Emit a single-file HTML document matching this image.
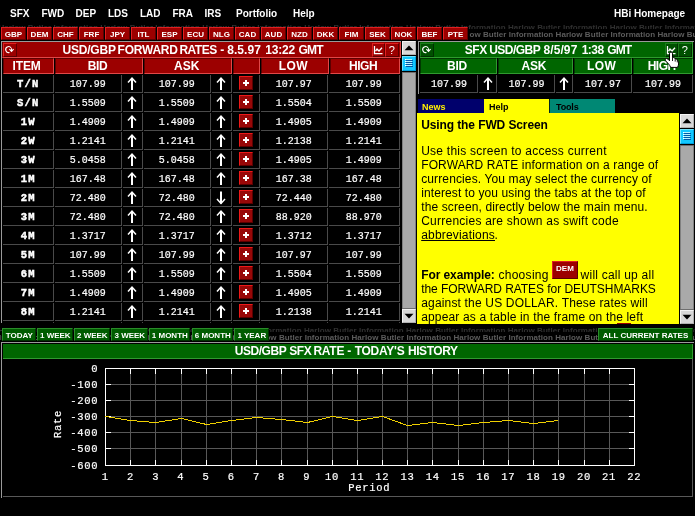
<!DOCTYPE html>
<html lang="en"><head><meta charset="utf-8"><title>HBi - USD/GBP Forward Rates</title>
<style>
html,body{margin:0;padding:0;background:#000;}
body{width:695px;height:516px;position:relative;overflow:hidden;}
div{position:absolute;}
.t{position:absolute;white-space:nowrap;display:block;margin:0;padding:0;}
.sb{font-family:'Liberation Sans',Arial,sans-serif;font-weight:bold;}
.sr{font-family:'Liberation Sans',Arial,sans-serif;font-weight:normal;}
.mr{font-family:'Liberation Mono','Courier New',monospace;font-weight:normal;-webkit-text-stroke:0.2px currentColor;}
.mb{font-family:'Liberation Mono','Courier New',monospace;font-weight:bold;}
</style></head>
<body>
<div id="app" style="left:0;top:0;width:695px;height:516px;overflow:hidden;will-change:transform">
<div style="left:0px;top:25px;width:695px;height:4px;overflow:hidden">
<span class="t sb" style="left:-103.40000000000003px;top:-2px;line-height:9px;font-size:8px;color:#303030;letter-spacing:0.055px" id="tick0">Harlow Butler Information Harlow Butler Information Harlow Butler Information Harlow Butler Information Harlow Butler Information Harlow Butler Information Harlow Butler Information Harlow Butler Information Harlow Butler Information Harlow Butler Information Harlow Butler Information Harlow Butler Information </span>
</div>
<div style="left:0px;top:30px;width:695px;height:8px;overflow:hidden">
<span class="t sb" style="left:-55.700000000000045px;top:0px;line-height:9px;font-size:8px;color:#5c5c5c;letter-spacing:0.055px" id="tick1">Harlow Butler Information Harlow Butler Information Harlow Butler Information Harlow Butler Information Harlow Butler Information Harlow Butler Information Harlow Butler Information Harlow Butler Information Harlow Butler Information Harlow Butler Information Harlow Butler Information Harlow Butler Information </span>
</div>
<div style="left:469px;top:38px;width:226px;height:2px;overflow:hidden">
<span class="t sb" style="left:-559.2px;top:-0.3999999999999986px;line-height:9px;font-size:8px;color:#555555;letter-spacing:0.055px" id="tick2">Harlow Butler Information Harlow Butler Information Harlow Butler Information Harlow Butler Information Harlow Butler Information Harlow Butler Information Harlow Butler Information Harlow Butler Information Harlow Butler Information Harlow Butler Information Harlow Butler Information Harlow Butler Information </span>
</div>
<div style="left:0px;top:327px;width:695px;height:5px;overflow:hidden">
<span class="t sb" style="left:-103.5px;top:-1.5px;line-height:9px;font-size:8px;color:#303030;letter-spacing:0.055px" id="tick3">Harlow Butler Information Harlow Butler Information Harlow Butler Information Harlow Butler Information Harlow Butler Information Harlow Butler Information Harlow Butler Information Harlow Butler Information Harlow Butler Information Harlow Butler Information Harlow Butler Information Harlow Butler Information </span>
</div>
<div style="left:0px;top:333px;width:695px;height:8px;overflow:hidden">
<span class="t sb" style="left:-56.0px;top:0px;line-height:9px;font-size:8px;color:#5c5c5c;letter-spacing:0.055px" id="tick4">Harlow Butler Information Harlow Butler Information Harlow Butler Information Harlow Butler Information Harlow Butler Information Harlow Butler Information Harlow Butler Information Harlow Butler Information Harlow Butler Information Harlow Butler Information Harlow Butler Information Harlow Butler Information </span>
</div>
<div style="left:0px;top:0px;width:695px;height:25px;background:#000;"></div>
<span id="t6" class="t sb" style="top:8px;line-height:11px;font-size:10px;color:#fff;left:10px;">SFX</span>
<span id="t7" class="t sb" style="top:8px;line-height:11px;font-size:10px;color:#fff;left:41.5px;">FWD</span>
<span id="t8" class="t sb" style="top:8px;line-height:11px;font-size:10px;color:#fff;left:75.5px;">DEP</span>
<span id="t9" class="t sb" style="top:8px;line-height:11px;font-size:10px;color:#fff;left:108px;">LDS</span>
<span id="t10" class="t sb" style="top:8px;line-height:11px;font-size:10px;color:#fff;left:140px;">LAD</span>
<span id="t11" class="t sb" style="top:8px;line-height:11px;font-size:10px;color:#fff;left:172.5px;">FRA</span>
<span id="t12" class="t sb" style="top:8px;line-height:11px;font-size:10px;color:#fff;left:204.5px;">IRS</span>
<span id="t13" class="t sb" style="top:8px;line-height:11px;font-size:10px;color:#fff;left:236px;">Portfolio</span>
<span id="t14" class="t sb" style="top:8px;line-height:11px;font-size:10px;color:#fff;left:293px;">Help</span>
<span id="t15" class="t sb" style="top:8px;line-height:11px;font-size:10px;color:#fff;left:614px;">HBi Homepage</span>
<div style="left:0px;top:27px;width:469px;height:14px;background:#000;"></div>
<div style="left:1px;top:27px;width:23px;height:11px;background:#9c0000;border:1px solid;border-color:#e02020 #5c0000 #5c0000 #e02020;"></div>
<span class="t sb" style="top:30px;line-height:9px;font-size:8px;color:#fff;left:-136.5px;width:300px;text-align:center;"><span id="t16">GBP</span></span>
<div style="left:27px;top:27px;width:23px;height:11px;background:#9c0000;border:1px solid;border-color:#e02020 #5c0000 #5c0000 #e02020;"></div>
<span class="t sb" style="top:30px;line-height:9px;font-size:8px;color:#fff;left:-110.5px;width:300px;text-align:center;"><span id="t17">DEM</span></span>
<div style="left:53px;top:27px;width:23px;height:11px;background:#9c0000;border:1px solid;border-color:#e02020 #5c0000 #5c0000 #e02020;"></div>
<span class="t sb" style="top:30px;line-height:9px;font-size:8px;color:#fff;left:-84.5px;width:300px;text-align:center;"><span id="t18">CHF</span></span>
<div style="left:79px;top:27px;width:23px;height:11px;background:#9c0000;border:1px solid;border-color:#e02020 #5c0000 #5c0000 #e02020;"></div>
<span class="t sb" style="top:30px;line-height:9px;font-size:8px;color:#fff;left:-58.5px;width:300px;text-align:center;"><span id="t19">FRF</span></span>
<div style="left:105px;top:27px;width:23px;height:11px;background:#9c0000;border:1px solid;border-color:#e02020 #5c0000 #5c0000 #e02020;"></div>
<span class="t sb" style="top:30px;line-height:9px;font-size:8px;color:#fff;left:-32.5px;width:300px;text-align:center;"><span id="t20">JPY</span></span>
<div style="left:131px;top:27px;width:23px;height:11px;background:#9c0000;border:1px solid;border-color:#e02020 #5c0000 #5c0000 #e02020;"></div>
<span class="t sb" style="top:30px;line-height:9px;font-size:8px;color:#fff;left:-6.5px;width:300px;text-align:center;"><span id="t21">ITL</span></span>
<div style="left:157px;top:27px;width:23px;height:11px;background:#9c0000;border:1px solid;border-color:#e02020 #5c0000 #5c0000 #e02020;"></div>
<span class="t sb" style="top:30px;line-height:9px;font-size:8px;color:#fff;left:19.5px;width:300px;text-align:center;"><span id="t22">ESP</span></span>
<div style="left:183px;top:27px;width:23px;height:11px;background:#9c0000;border:1px solid;border-color:#e02020 #5c0000 #5c0000 #e02020;"></div>
<span class="t sb" style="top:30px;line-height:9px;font-size:8px;color:#fff;left:45.5px;width:300px;text-align:center;"><span id="t23">ECU</span></span>
<div style="left:209px;top:27px;width:23px;height:11px;background:#9c0000;border:1px solid;border-color:#e02020 #5c0000 #5c0000 #e02020;"></div>
<span class="t sb" style="top:30px;line-height:9px;font-size:8px;color:#fff;left:71.5px;width:300px;text-align:center;"><span id="t24">NLG</span></span>
<div style="left:235px;top:27px;width:23px;height:11px;background:#9c0000;border:1px solid;border-color:#e02020 #5c0000 #5c0000 #e02020;"></div>
<span class="t sb" style="top:30px;line-height:9px;font-size:8px;color:#fff;left:97.5px;width:300px;text-align:center;"><span id="t25">CAD</span></span>
<div style="left:261px;top:27px;width:23px;height:11px;background:#9c0000;border:1px solid;border-color:#e02020 #5c0000 #5c0000 #e02020;"></div>
<span class="t sb" style="top:30px;line-height:9px;font-size:8px;color:#fff;left:123.5px;width:300px;text-align:center;"><span id="t26">AUD</span></span>
<div style="left:287px;top:27px;width:23px;height:11px;background:#9c0000;border:1px solid;border-color:#e02020 #5c0000 #5c0000 #e02020;"></div>
<span class="t sb" style="top:30px;line-height:9px;font-size:8px;color:#fff;left:149.5px;width:300px;text-align:center;"><span id="t27">NZD</span></span>
<div style="left:313px;top:27px;width:23px;height:11px;background:#9c0000;border:1px solid;border-color:#e02020 #5c0000 #5c0000 #e02020;"></div>
<span class="t sb" style="top:30px;line-height:9px;font-size:8px;color:#fff;left:175.5px;width:300px;text-align:center;"><span id="t28">DKK</span></span>
<div style="left:339px;top:27px;width:23px;height:11px;background:#9c0000;border:1px solid;border-color:#e02020 #5c0000 #5c0000 #e02020;"></div>
<span class="t sb" style="top:30px;line-height:9px;font-size:8px;color:#fff;left:201.5px;width:300px;text-align:center;"><span id="t29">FIM</span></span>
<div style="left:365px;top:27px;width:23px;height:11px;background:#9c0000;border:1px solid;border-color:#e02020 #5c0000 #5c0000 #e02020;"></div>
<span class="t sb" style="top:30px;line-height:9px;font-size:8px;color:#fff;left:227.5px;width:300px;text-align:center;"><span id="t30">SEK</span></span>
<div style="left:391px;top:27px;width:23px;height:11px;background:#9c0000;border:1px solid;border-color:#e02020 #5c0000 #5c0000 #e02020;"></div>
<span class="t sb" style="top:30px;line-height:9px;font-size:8px;color:#fff;left:253.5px;width:300px;text-align:center;"><span id="t31">NOK</span></span>
<div style="left:417px;top:27px;width:23px;height:11px;background:#9c0000;border:1px solid;border-color:#e02020 #5c0000 #5c0000 #e02020;"></div>
<span class="t sb" style="top:30px;line-height:9px;font-size:8px;color:#fff;left:279.5px;width:300px;text-align:center;"><span id="t32">BEF</span></span>
<div style="left:443px;top:27px;width:23px;height:11px;background:#9c0000;border:1px solid;border-color:#e02020 #5c0000 #5c0000 #e02020;"></div>
<span class="t sb" style="top:30px;line-height:9px;font-size:8px;color:#fff;left:305.5px;width:300px;text-align:center;"><span id="t33">PTE</span></span>
<div style="left:0px;top:40px;width:469px;height:1px;background:#000;"></div>
<div style="left:1px;top:41px;width:415px;height:282px;background:#000;"></div>
<div style="left:1px;top:41px;width:400px;height:1px;background:#9a9a9a;"></div>
<div style="left:1px;top:41px;width:1px;height:282px;background:#9a9a9a;"></div>
<div style="left:2px;top:42px;width:397px;height:15px;background:#9c0000;border-left:1px solid #6a0000;border-right:1px solid #e04848;border-bottom:1px solid #e04848"></div>
<div style="left:3px;top:43px;width:12px;height:12px;background:#9c0000;border:1px solid;border-color:#e02020 #5c0000 #5c0000 #e02020;"></div>
<div style="left:372px;top:43px;width:11px;height:12px;background:#9c0000;border:1px solid;border-color:#e02020 #5c0000 #5c0000 #e02020;"></div>
<div style="left:385px;top:43px;width:12px;height:12px;background:#9c0000;border:1px solid;border-color:#e02020 #5c0000 #5c0000 #e02020;"></div>
<span id="t34" class="t sb" style="top:43px;line-height:14px;font-size:12px;color:#fff;letter-spacing:-0.227px;left:62.6px;">USD/GBP</span>
<span id="t35" class="t sb" style="top:43px;line-height:14px;font-size:12px;color:#fff;letter-spacing:-0.240px;left:117.6px;">FORWARD</span>
<span id="t36" class="t sb" style="top:43px;line-height:14px;font-size:12px;color:#fff;letter-spacing:-0.506px;left:179.45px;">RATES</span>
<span id="t37" class="t sb" style="top:43px;line-height:14px;font-size:12px;color:#fff;letter-spacing:1.250px;left:220.2px;">-</span>
<span id="t38" class="t sb" style="top:43px;line-height:14px;font-size:12px;color:#fff;letter-spacing:0.062px;left:227.2px;">8.5.97</span>
<span id="t39" class="t sb" style="top:43px;line-height:14px;font-size:12px;color:#fff;letter-spacing:-0.191px;left:265.2px;">13:22</span>
<span id="t40" class="t sb" style="top:43px;line-height:14px;font-size:12px;color:#fff;letter-spacing:-0.724px;left:298.45px;">GMT</span>
<span class="t sr" style="top:44px;line-height:12px;font-size:11px;color:#fff;left:241.7px;width:300px;text-align:center;"><span id="t41">?</span></span>
<div style="left:3px;top:58px;width:49px;height:14px;background:#9c0000;border:1px solid;border-color:#5c0000 #e04848 #e04848 #5c0000;"></div>
<span id="t42" class="t sb" style="top:59px;line-height:14px;font-size:12px;color:#fff;letter-spacing:-0.143px;left:12.6px;">ITEM</span>
<div style="left:55px;top:58px;width:86px;height:14px;background:#9c0000;border:1px solid;border-color:#5c0000 #e04848 #e04848 #5c0000;"></div>
<span id="t43" class="t sb" style="top:59px;line-height:14px;font-size:12px;color:#fff;letter-spacing:-0.356px;left:87.69999999999999px;">BID</span>
<div style="left:144px;top:58px;width:86px;height:14px;background:#9c0000;border:1px solid;border-color:#5c0000 #e04848 #e04848 #5c0000;"></div>
<span id="t44" class="t sb" style="top:59px;line-height:14px;font-size:12px;color:#fff;letter-spacing:0.000px;left:174.1px;">ASK</span>
<div style="left:233px;top:58px;width:25px;height:14px;background:#9c0000;border:1px solid;border-color:#5c0000 #e04848 #e04848 #5c0000;"></div>
<div style="left:261px;top:58px;width:66px;height:14px;background:#9c0000;border:1px solid;border-color:#5c0000 #e04848 #e04848 #5c0000;"></div>
<span id="t45" class="t sb" style="top:59px;line-height:14px;font-size:12px;color:#fff;letter-spacing:0.467px;left:278.70000000000005px;">LOW</span>
<div style="left:330px;top:58px;width:68px;height:14px;background:#9c0000;border:1px solid;border-color:#5c0000 #e04848 #e04848 #5c0000;"></div>
<span id="t46" class="t sb" style="top:59px;line-height:14px;font-size:12px;color:#fff;letter-spacing:-0.500px;left:349.1px;">HIGH</span>
<div style="left:0;top:74px;width:401px;height:249px;overflow:hidden">
<div style="left:53px;top:1px;width:1px;height:18px;background:#4a4a4a;"></div>
<div style="left:3px;top:18px;width:51px;height:1px;background:#4a4a4a;"></div>
<div style="left:121px;top:1px;width:1px;height:18px;background:#4a4a4a;"></div>
<div style="left:55px;top:18px;width:67px;height:1px;background:#4a4a4a;"></div>
<div style="left:142px;top:1px;width:1px;height:18px;background:#4a4a4a;"></div>
<div style="left:123px;top:18px;width:20px;height:1px;background:#4a4a4a;"></div>
<div style="left:210px;top:1px;width:1px;height:18px;background:#4a4a4a;"></div>
<div style="left:144px;top:18px;width:67px;height:1px;background:#4a4a4a;"></div>
<div style="left:231px;top:1px;width:1px;height:18px;background:#4a4a4a;"></div>
<div style="left:212px;top:18px;width:20px;height:1px;background:#4a4a4a;"></div>
<div style="left:259px;top:1px;width:1px;height:18px;background:#4a4a4a;"></div>
<div style="left:233px;top:18px;width:27px;height:1px;background:#4a4a4a;"></div>
<div style="left:327px;top:1px;width:1px;height:18px;background:#4a4a4a;"></div>
<div style="left:261px;top:18px;width:67px;height:1px;background:#4a4a4a;"></div>
<div style="left:399px;top:1px;width:1px;height:18px;background:#4a4a4a;"></div>
<div style="left:329px;top:18px;width:71px;height:1px;background:#4a4a4a;"></div>
<span class="t mb" style="top:4px;line-height:12px;font-size:10.5px;color:#fff;left:-121.7px;width:300px;text-align:center;letter-spacing:1.2px;-webkit-text-stroke:0.45px #fff;"><span id="t47">T/N</span></span>
<span class="t mr" style="top:5px;line-height:11px;font-size:10px;color:#fff;left:-62.2px;width:300px;text-align:center;"><span id="t48">107.99</span></span>
<span class="t mr" style="top:5px;line-height:11px;font-size:10px;color:#fff;left:26.80000000000001px;width:300px;text-align:center;"><span id="t49">107.99</span></span>
<span class="t mr" style="top:5px;line-height:11px;font-size:10px;color:#fff;left:143.8px;width:300px;text-align:center;"><span id="t50">107.97</span></span>
<span class="t mr" style="top:5px;line-height:11px;font-size:10px;color:#fff;left:213.8px;width:300px;text-align:center;"><span id="t51">107.99</span></span>
<div style="left:239px;top:2px;width:12px;height:12px;background:#980808;border:1px solid;border-color:#ee1818 #5c0000 #5c0000 #ee1818;"></div>
<div style="left:53px;top:20px;width:1px;height:18px;background:#4a4a4a;"></div>
<div style="left:3px;top:37px;width:51px;height:1px;background:#4a4a4a;"></div>
<div style="left:121px;top:20px;width:1px;height:18px;background:#4a4a4a;"></div>
<div style="left:55px;top:37px;width:67px;height:1px;background:#4a4a4a;"></div>
<div style="left:142px;top:20px;width:1px;height:18px;background:#4a4a4a;"></div>
<div style="left:123px;top:37px;width:20px;height:1px;background:#4a4a4a;"></div>
<div style="left:210px;top:20px;width:1px;height:18px;background:#4a4a4a;"></div>
<div style="left:144px;top:37px;width:67px;height:1px;background:#4a4a4a;"></div>
<div style="left:231px;top:20px;width:1px;height:18px;background:#4a4a4a;"></div>
<div style="left:212px;top:37px;width:20px;height:1px;background:#4a4a4a;"></div>
<div style="left:259px;top:20px;width:1px;height:18px;background:#4a4a4a;"></div>
<div style="left:233px;top:37px;width:27px;height:1px;background:#4a4a4a;"></div>
<div style="left:327px;top:20px;width:1px;height:18px;background:#4a4a4a;"></div>
<div style="left:261px;top:37px;width:67px;height:1px;background:#4a4a4a;"></div>
<div style="left:399px;top:20px;width:1px;height:18px;background:#4a4a4a;"></div>
<div style="left:329px;top:37px;width:71px;height:1px;background:#4a4a4a;"></div>
<span class="t mb" style="top:23px;line-height:12px;font-size:10.5px;color:#fff;left:-121.7px;width:300px;text-align:center;letter-spacing:1.2px;-webkit-text-stroke:0.45px #fff;"><span id="t52">S/N</span></span>
<span class="t mr" style="top:24px;line-height:11px;font-size:10px;color:#fff;left:-62.2px;width:300px;text-align:center;"><span id="t53">1.5509</span></span>
<span class="t mr" style="top:24px;line-height:11px;font-size:10px;color:#fff;left:26.80000000000001px;width:300px;text-align:center;"><span id="t54">1.5509</span></span>
<span class="t mr" style="top:24px;line-height:11px;font-size:10px;color:#fff;left:143.8px;width:300px;text-align:center;"><span id="t55">1.5504</span></span>
<span class="t mr" style="top:24px;line-height:11px;font-size:10px;color:#fff;left:213.8px;width:300px;text-align:center;"><span id="t56">1.5509</span></span>
<div style="left:239px;top:21px;width:12px;height:12px;background:#980808;border:1px solid;border-color:#ee1818 #5c0000 #5c0000 #ee1818;"></div>
<div style="left:53px;top:39px;width:1px;height:18px;background:#4a4a4a;"></div>
<div style="left:3px;top:56px;width:51px;height:1px;background:#4a4a4a;"></div>
<div style="left:121px;top:39px;width:1px;height:18px;background:#4a4a4a;"></div>
<div style="left:55px;top:56px;width:67px;height:1px;background:#4a4a4a;"></div>
<div style="left:142px;top:39px;width:1px;height:18px;background:#4a4a4a;"></div>
<div style="left:123px;top:56px;width:20px;height:1px;background:#4a4a4a;"></div>
<div style="left:210px;top:39px;width:1px;height:18px;background:#4a4a4a;"></div>
<div style="left:144px;top:56px;width:67px;height:1px;background:#4a4a4a;"></div>
<div style="left:231px;top:39px;width:1px;height:18px;background:#4a4a4a;"></div>
<div style="left:212px;top:56px;width:20px;height:1px;background:#4a4a4a;"></div>
<div style="left:259px;top:39px;width:1px;height:18px;background:#4a4a4a;"></div>
<div style="left:233px;top:56px;width:27px;height:1px;background:#4a4a4a;"></div>
<div style="left:327px;top:39px;width:1px;height:18px;background:#4a4a4a;"></div>
<div style="left:261px;top:56px;width:67px;height:1px;background:#4a4a4a;"></div>
<div style="left:399px;top:39px;width:1px;height:18px;background:#4a4a4a;"></div>
<div style="left:329px;top:56px;width:71px;height:1px;background:#4a4a4a;"></div>
<span class="t mb" style="top:42px;line-height:12px;font-size:10.5px;color:#fff;left:-121.7px;width:300px;text-align:center;letter-spacing:1.2px;-webkit-text-stroke:0.45px #fff;"><span id="t57">1W</span></span>
<span class="t mr" style="top:43px;line-height:11px;font-size:10px;color:#fff;left:-62.2px;width:300px;text-align:center;"><span id="t58">1.4909</span></span>
<span class="t mr" style="top:43px;line-height:11px;font-size:10px;color:#fff;left:26.80000000000001px;width:300px;text-align:center;"><span id="t59">1.4909</span></span>
<span class="t mr" style="top:43px;line-height:11px;font-size:10px;color:#fff;left:143.8px;width:300px;text-align:center;"><span id="t60">1.4905</span></span>
<span class="t mr" style="top:43px;line-height:11px;font-size:10px;color:#fff;left:213.8px;width:300px;text-align:center;"><span id="t61">1.4909</span></span>
<div style="left:239px;top:40px;width:12px;height:12px;background:#980808;border:1px solid;border-color:#ee1818 #5c0000 #5c0000 #ee1818;"></div>
<div style="left:53px;top:58px;width:1px;height:18px;background:#4a4a4a;"></div>
<div style="left:3px;top:75px;width:51px;height:1px;background:#4a4a4a;"></div>
<div style="left:121px;top:58px;width:1px;height:18px;background:#4a4a4a;"></div>
<div style="left:55px;top:75px;width:67px;height:1px;background:#4a4a4a;"></div>
<div style="left:142px;top:58px;width:1px;height:18px;background:#4a4a4a;"></div>
<div style="left:123px;top:75px;width:20px;height:1px;background:#4a4a4a;"></div>
<div style="left:210px;top:58px;width:1px;height:18px;background:#4a4a4a;"></div>
<div style="left:144px;top:75px;width:67px;height:1px;background:#4a4a4a;"></div>
<div style="left:231px;top:58px;width:1px;height:18px;background:#4a4a4a;"></div>
<div style="left:212px;top:75px;width:20px;height:1px;background:#4a4a4a;"></div>
<div style="left:259px;top:58px;width:1px;height:18px;background:#4a4a4a;"></div>
<div style="left:233px;top:75px;width:27px;height:1px;background:#4a4a4a;"></div>
<div style="left:327px;top:58px;width:1px;height:18px;background:#4a4a4a;"></div>
<div style="left:261px;top:75px;width:67px;height:1px;background:#4a4a4a;"></div>
<div style="left:399px;top:58px;width:1px;height:18px;background:#4a4a4a;"></div>
<div style="left:329px;top:75px;width:71px;height:1px;background:#4a4a4a;"></div>
<span class="t mb" style="top:61px;line-height:12px;font-size:10.5px;color:#fff;left:-121.7px;width:300px;text-align:center;letter-spacing:1.2px;-webkit-text-stroke:0.45px #fff;"><span id="t62">2W</span></span>
<span class="t mr" style="top:62px;line-height:11px;font-size:10px;color:#fff;left:-62.2px;width:300px;text-align:center;"><span id="t63">1.2141</span></span>
<span class="t mr" style="top:62px;line-height:11px;font-size:10px;color:#fff;left:26.80000000000001px;width:300px;text-align:center;"><span id="t64">1.2141</span></span>
<span class="t mr" style="top:62px;line-height:11px;font-size:10px;color:#fff;left:143.8px;width:300px;text-align:center;"><span id="t65">1.2138</span></span>
<span class="t mr" style="top:62px;line-height:11px;font-size:10px;color:#fff;left:213.8px;width:300px;text-align:center;"><span id="t66">1.2141</span></span>
<div style="left:239px;top:59px;width:12px;height:12px;background:#980808;border:1px solid;border-color:#ee1818 #5c0000 #5c0000 #ee1818;"></div>
<div style="left:53px;top:77px;width:1px;height:18px;background:#4a4a4a;"></div>
<div style="left:3px;top:94px;width:51px;height:1px;background:#4a4a4a;"></div>
<div style="left:121px;top:77px;width:1px;height:18px;background:#4a4a4a;"></div>
<div style="left:55px;top:94px;width:67px;height:1px;background:#4a4a4a;"></div>
<div style="left:142px;top:77px;width:1px;height:18px;background:#4a4a4a;"></div>
<div style="left:123px;top:94px;width:20px;height:1px;background:#4a4a4a;"></div>
<div style="left:210px;top:77px;width:1px;height:18px;background:#4a4a4a;"></div>
<div style="left:144px;top:94px;width:67px;height:1px;background:#4a4a4a;"></div>
<div style="left:231px;top:77px;width:1px;height:18px;background:#4a4a4a;"></div>
<div style="left:212px;top:94px;width:20px;height:1px;background:#4a4a4a;"></div>
<div style="left:259px;top:77px;width:1px;height:18px;background:#4a4a4a;"></div>
<div style="left:233px;top:94px;width:27px;height:1px;background:#4a4a4a;"></div>
<div style="left:327px;top:77px;width:1px;height:18px;background:#4a4a4a;"></div>
<div style="left:261px;top:94px;width:67px;height:1px;background:#4a4a4a;"></div>
<div style="left:399px;top:77px;width:1px;height:18px;background:#4a4a4a;"></div>
<div style="left:329px;top:94px;width:71px;height:1px;background:#4a4a4a;"></div>
<span class="t mb" style="top:80px;line-height:12px;font-size:10.5px;color:#fff;left:-121.7px;width:300px;text-align:center;letter-spacing:1.2px;-webkit-text-stroke:0.45px #fff;"><span id="t67">3W</span></span>
<span class="t mr" style="top:81px;line-height:11px;font-size:10px;color:#fff;left:-62.2px;width:300px;text-align:center;"><span id="t68">5.0458</span></span>
<span class="t mr" style="top:81px;line-height:11px;font-size:10px;color:#fff;left:26.80000000000001px;width:300px;text-align:center;"><span id="t69">5.0458</span></span>
<span class="t mr" style="top:81px;line-height:11px;font-size:10px;color:#fff;left:143.8px;width:300px;text-align:center;"><span id="t70">1.4905</span></span>
<span class="t mr" style="top:81px;line-height:11px;font-size:10px;color:#fff;left:213.8px;width:300px;text-align:center;"><span id="t71">1.4909</span></span>
<div style="left:239px;top:78px;width:12px;height:12px;background:#980808;border:1px solid;border-color:#ee1818 #5c0000 #5c0000 #ee1818;"></div>
<div style="left:53px;top:96px;width:1px;height:18px;background:#4a4a4a;"></div>
<div style="left:3px;top:113px;width:51px;height:1px;background:#4a4a4a;"></div>
<div style="left:121px;top:96px;width:1px;height:18px;background:#4a4a4a;"></div>
<div style="left:55px;top:113px;width:67px;height:1px;background:#4a4a4a;"></div>
<div style="left:142px;top:96px;width:1px;height:18px;background:#4a4a4a;"></div>
<div style="left:123px;top:113px;width:20px;height:1px;background:#4a4a4a;"></div>
<div style="left:210px;top:96px;width:1px;height:18px;background:#4a4a4a;"></div>
<div style="left:144px;top:113px;width:67px;height:1px;background:#4a4a4a;"></div>
<div style="left:231px;top:96px;width:1px;height:18px;background:#4a4a4a;"></div>
<div style="left:212px;top:113px;width:20px;height:1px;background:#4a4a4a;"></div>
<div style="left:259px;top:96px;width:1px;height:18px;background:#4a4a4a;"></div>
<div style="left:233px;top:113px;width:27px;height:1px;background:#4a4a4a;"></div>
<div style="left:327px;top:96px;width:1px;height:18px;background:#4a4a4a;"></div>
<div style="left:261px;top:113px;width:67px;height:1px;background:#4a4a4a;"></div>
<div style="left:399px;top:96px;width:1px;height:18px;background:#4a4a4a;"></div>
<div style="left:329px;top:113px;width:71px;height:1px;background:#4a4a4a;"></div>
<span class="t mb" style="top:99px;line-height:12px;font-size:10.5px;color:#fff;left:-121.7px;width:300px;text-align:center;letter-spacing:1.2px;-webkit-text-stroke:0.45px #fff;"><span id="t72">1M</span></span>
<span class="t mr" style="top:100px;line-height:11px;font-size:10px;color:#fff;left:-62.2px;width:300px;text-align:center;"><span id="t73">167.48</span></span>
<span class="t mr" style="top:100px;line-height:11px;font-size:10px;color:#fff;left:26.80000000000001px;width:300px;text-align:center;"><span id="t74">167.48</span></span>
<span class="t mr" style="top:100px;line-height:11px;font-size:10px;color:#fff;left:143.8px;width:300px;text-align:center;"><span id="t75">167.38</span></span>
<span class="t mr" style="top:100px;line-height:11px;font-size:10px;color:#fff;left:213.8px;width:300px;text-align:center;"><span id="t76">167.48</span></span>
<div style="left:239px;top:97px;width:12px;height:12px;background:#980808;border:1px solid;border-color:#ee1818 #5c0000 #5c0000 #ee1818;"></div>
<div style="left:53px;top:115px;width:1px;height:18px;background:#4a4a4a;"></div>
<div style="left:3px;top:132px;width:51px;height:1px;background:#4a4a4a;"></div>
<div style="left:121px;top:115px;width:1px;height:18px;background:#4a4a4a;"></div>
<div style="left:55px;top:132px;width:67px;height:1px;background:#4a4a4a;"></div>
<div style="left:142px;top:115px;width:1px;height:18px;background:#4a4a4a;"></div>
<div style="left:123px;top:132px;width:20px;height:1px;background:#4a4a4a;"></div>
<div style="left:210px;top:115px;width:1px;height:18px;background:#4a4a4a;"></div>
<div style="left:144px;top:132px;width:67px;height:1px;background:#4a4a4a;"></div>
<div style="left:231px;top:115px;width:1px;height:18px;background:#4a4a4a;"></div>
<div style="left:212px;top:132px;width:20px;height:1px;background:#4a4a4a;"></div>
<div style="left:259px;top:115px;width:1px;height:18px;background:#4a4a4a;"></div>
<div style="left:233px;top:132px;width:27px;height:1px;background:#4a4a4a;"></div>
<div style="left:327px;top:115px;width:1px;height:18px;background:#4a4a4a;"></div>
<div style="left:261px;top:132px;width:67px;height:1px;background:#4a4a4a;"></div>
<div style="left:399px;top:115px;width:1px;height:18px;background:#4a4a4a;"></div>
<div style="left:329px;top:132px;width:71px;height:1px;background:#4a4a4a;"></div>
<span class="t mb" style="top:118px;line-height:12px;font-size:10.5px;color:#fff;left:-121.7px;width:300px;text-align:center;letter-spacing:1.2px;-webkit-text-stroke:0.45px #fff;"><span id="t77">2M</span></span>
<span class="t mr" style="top:119px;line-height:11px;font-size:10px;color:#fff;left:-62.2px;width:300px;text-align:center;"><span id="t78">72.480</span></span>
<span class="t mr" style="top:119px;line-height:11px;font-size:10px;color:#fff;left:26.80000000000001px;width:300px;text-align:center;"><span id="t79">72.480</span></span>
<span class="t mr" style="top:119px;line-height:11px;font-size:10px;color:#fff;left:143.8px;width:300px;text-align:center;"><span id="t80">72.440</span></span>
<span class="t mr" style="top:119px;line-height:11px;font-size:10px;color:#fff;left:213.8px;width:300px;text-align:center;"><span id="t81">72.480</span></span>
<div style="left:239px;top:116px;width:12px;height:12px;background:#980808;border:1px solid;border-color:#ee1818 #5c0000 #5c0000 #ee1818;"></div>
<div style="left:53px;top:134px;width:1px;height:18px;background:#4a4a4a;"></div>
<div style="left:3px;top:151px;width:51px;height:1px;background:#4a4a4a;"></div>
<div style="left:121px;top:134px;width:1px;height:18px;background:#4a4a4a;"></div>
<div style="left:55px;top:151px;width:67px;height:1px;background:#4a4a4a;"></div>
<div style="left:142px;top:134px;width:1px;height:18px;background:#4a4a4a;"></div>
<div style="left:123px;top:151px;width:20px;height:1px;background:#4a4a4a;"></div>
<div style="left:210px;top:134px;width:1px;height:18px;background:#4a4a4a;"></div>
<div style="left:144px;top:151px;width:67px;height:1px;background:#4a4a4a;"></div>
<div style="left:231px;top:134px;width:1px;height:18px;background:#4a4a4a;"></div>
<div style="left:212px;top:151px;width:20px;height:1px;background:#4a4a4a;"></div>
<div style="left:259px;top:134px;width:1px;height:18px;background:#4a4a4a;"></div>
<div style="left:233px;top:151px;width:27px;height:1px;background:#4a4a4a;"></div>
<div style="left:327px;top:134px;width:1px;height:18px;background:#4a4a4a;"></div>
<div style="left:261px;top:151px;width:67px;height:1px;background:#4a4a4a;"></div>
<div style="left:399px;top:134px;width:1px;height:18px;background:#4a4a4a;"></div>
<div style="left:329px;top:151px;width:71px;height:1px;background:#4a4a4a;"></div>
<span class="t mb" style="top:137px;line-height:12px;font-size:10.5px;color:#fff;left:-121.7px;width:300px;text-align:center;letter-spacing:1.2px;-webkit-text-stroke:0.45px #fff;"><span id="t82">3M</span></span>
<span class="t mr" style="top:138px;line-height:11px;font-size:10px;color:#fff;left:-62.2px;width:300px;text-align:center;"><span id="t83">72.480</span></span>
<span class="t mr" style="top:138px;line-height:11px;font-size:10px;color:#fff;left:26.80000000000001px;width:300px;text-align:center;"><span id="t84">72.480</span></span>
<span class="t mr" style="top:138px;line-height:11px;font-size:10px;color:#fff;left:143.8px;width:300px;text-align:center;"><span id="t85">88.920</span></span>
<span class="t mr" style="top:138px;line-height:11px;font-size:10px;color:#fff;left:213.8px;width:300px;text-align:center;"><span id="t86">88.970</span></span>
<div style="left:239px;top:135px;width:12px;height:12px;background:#980808;border:1px solid;border-color:#ee1818 #5c0000 #5c0000 #ee1818;"></div>
<div style="left:53px;top:153px;width:1px;height:18px;background:#4a4a4a;"></div>
<div style="left:3px;top:170px;width:51px;height:1px;background:#4a4a4a;"></div>
<div style="left:121px;top:153px;width:1px;height:18px;background:#4a4a4a;"></div>
<div style="left:55px;top:170px;width:67px;height:1px;background:#4a4a4a;"></div>
<div style="left:142px;top:153px;width:1px;height:18px;background:#4a4a4a;"></div>
<div style="left:123px;top:170px;width:20px;height:1px;background:#4a4a4a;"></div>
<div style="left:210px;top:153px;width:1px;height:18px;background:#4a4a4a;"></div>
<div style="left:144px;top:170px;width:67px;height:1px;background:#4a4a4a;"></div>
<div style="left:231px;top:153px;width:1px;height:18px;background:#4a4a4a;"></div>
<div style="left:212px;top:170px;width:20px;height:1px;background:#4a4a4a;"></div>
<div style="left:259px;top:153px;width:1px;height:18px;background:#4a4a4a;"></div>
<div style="left:233px;top:170px;width:27px;height:1px;background:#4a4a4a;"></div>
<div style="left:327px;top:153px;width:1px;height:18px;background:#4a4a4a;"></div>
<div style="left:261px;top:170px;width:67px;height:1px;background:#4a4a4a;"></div>
<div style="left:399px;top:153px;width:1px;height:18px;background:#4a4a4a;"></div>
<div style="left:329px;top:170px;width:71px;height:1px;background:#4a4a4a;"></div>
<span class="t mb" style="top:156px;line-height:12px;font-size:10.5px;color:#fff;left:-121.7px;width:300px;text-align:center;letter-spacing:1.2px;-webkit-text-stroke:0.45px #fff;"><span id="t87">4M</span></span>
<span class="t mr" style="top:157px;line-height:11px;font-size:10px;color:#fff;left:-62.2px;width:300px;text-align:center;"><span id="t88">1.3717</span></span>
<span class="t mr" style="top:157px;line-height:11px;font-size:10px;color:#fff;left:26.80000000000001px;width:300px;text-align:center;"><span id="t89">1.3717</span></span>
<span class="t mr" style="top:157px;line-height:11px;font-size:10px;color:#fff;left:143.8px;width:300px;text-align:center;"><span id="t90">1.3712</span></span>
<span class="t mr" style="top:157px;line-height:11px;font-size:10px;color:#fff;left:213.8px;width:300px;text-align:center;"><span id="t91">1.3717</span></span>
<div style="left:239px;top:154px;width:12px;height:12px;background:#980808;border:1px solid;border-color:#ee1818 #5c0000 #5c0000 #ee1818;"></div>
<div style="left:53px;top:172px;width:1px;height:18px;background:#4a4a4a;"></div>
<div style="left:3px;top:189px;width:51px;height:1px;background:#4a4a4a;"></div>
<div style="left:121px;top:172px;width:1px;height:18px;background:#4a4a4a;"></div>
<div style="left:55px;top:189px;width:67px;height:1px;background:#4a4a4a;"></div>
<div style="left:142px;top:172px;width:1px;height:18px;background:#4a4a4a;"></div>
<div style="left:123px;top:189px;width:20px;height:1px;background:#4a4a4a;"></div>
<div style="left:210px;top:172px;width:1px;height:18px;background:#4a4a4a;"></div>
<div style="left:144px;top:189px;width:67px;height:1px;background:#4a4a4a;"></div>
<div style="left:231px;top:172px;width:1px;height:18px;background:#4a4a4a;"></div>
<div style="left:212px;top:189px;width:20px;height:1px;background:#4a4a4a;"></div>
<div style="left:259px;top:172px;width:1px;height:18px;background:#4a4a4a;"></div>
<div style="left:233px;top:189px;width:27px;height:1px;background:#4a4a4a;"></div>
<div style="left:327px;top:172px;width:1px;height:18px;background:#4a4a4a;"></div>
<div style="left:261px;top:189px;width:67px;height:1px;background:#4a4a4a;"></div>
<div style="left:399px;top:172px;width:1px;height:18px;background:#4a4a4a;"></div>
<div style="left:329px;top:189px;width:71px;height:1px;background:#4a4a4a;"></div>
<span class="t mb" style="top:175px;line-height:12px;font-size:10.5px;color:#fff;left:-121.7px;width:300px;text-align:center;letter-spacing:1.2px;-webkit-text-stroke:0.45px #fff;"><span id="t92">5M</span></span>
<span class="t mr" style="top:176px;line-height:11px;font-size:10px;color:#fff;left:-62.2px;width:300px;text-align:center;"><span id="t93">107.99</span></span>
<span class="t mr" style="top:176px;line-height:11px;font-size:10px;color:#fff;left:26.80000000000001px;width:300px;text-align:center;"><span id="t94">107.99</span></span>
<span class="t mr" style="top:176px;line-height:11px;font-size:10px;color:#fff;left:143.8px;width:300px;text-align:center;"><span id="t95">107.97</span></span>
<span class="t mr" style="top:176px;line-height:11px;font-size:10px;color:#fff;left:213.8px;width:300px;text-align:center;"><span id="t96">107.99</span></span>
<div style="left:239px;top:173px;width:12px;height:12px;background:#980808;border:1px solid;border-color:#ee1818 #5c0000 #5c0000 #ee1818;"></div>
<div style="left:53px;top:191px;width:1px;height:18px;background:#4a4a4a;"></div>
<div style="left:3px;top:208px;width:51px;height:1px;background:#4a4a4a;"></div>
<div style="left:121px;top:191px;width:1px;height:18px;background:#4a4a4a;"></div>
<div style="left:55px;top:208px;width:67px;height:1px;background:#4a4a4a;"></div>
<div style="left:142px;top:191px;width:1px;height:18px;background:#4a4a4a;"></div>
<div style="left:123px;top:208px;width:20px;height:1px;background:#4a4a4a;"></div>
<div style="left:210px;top:191px;width:1px;height:18px;background:#4a4a4a;"></div>
<div style="left:144px;top:208px;width:67px;height:1px;background:#4a4a4a;"></div>
<div style="left:231px;top:191px;width:1px;height:18px;background:#4a4a4a;"></div>
<div style="left:212px;top:208px;width:20px;height:1px;background:#4a4a4a;"></div>
<div style="left:259px;top:191px;width:1px;height:18px;background:#4a4a4a;"></div>
<div style="left:233px;top:208px;width:27px;height:1px;background:#4a4a4a;"></div>
<div style="left:327px;top:191px;width:1px;height:18px;background:#4a4a4a;"></div>
<div style="left:261px;top:208px;width:67px;height:1px;background:#4a4a4a;"></div>
<div style="left:399px;top:191px;width:1px;height:18px;background:#4a4a4a;"></div>
<div style="left:329px;top:208px;width:71px;height:1px;background:#4a4a4a;"></div>
<span class="t mb" style="top:194px;line-height:12px;font-size:10.5px;color:#fff;left:-121.7px;width:300px;text-align:center;letter-spacing:1.2px;-webkit-text-stroke:0.45px #fff;"><span id="t97">6M</span></span>
<span class="t mr" style="top:195px;line-height:11px;font-size:10px;color:#fff;left:-62.2px;width:300px;text-align:center;"><span id="t98">1.5509</span></span>
<span class="t mr" style="top:195px;line-height:11px;font-size:10px;color:#fff;left:26.80000000000001px;width:300px;text-align:center;"><span id="t99">1.5509</span></span>
<span class="t mr" style="top:195px;line-height:11px;font-size:10px;color:#fff;left:143.8px;width:300px;text-align:center;"><span id="t100">1.5504</span></span>
<span class="t mr" style="top:195px;line-height:11px;font-size:10px;color:#fff;left:213.8px;width:300px;text-align:center;"><span id="t101">1.5509</span></span>
<div style="left:239px;top:192px;width:12px;height:12px;background:#980808;border:1px solid;border-color:#ee1818 #5c0000 #5c0000 #ee1818;"></div>
<div style="left:53px;top:210px;width:1px;height:18px;background:#4a4a4a;"></div>
<div style="left:3px;top:227px;width:51px;height:1px;background:#4a4a4a;"></div>
<div style="left:121px;top:210px;width:1px;height:18px;background:#4a4a4a;"></div>
<div style="left:55px;top:227px;width:67px;height:1px;background:#4a4a4a;"></div>
<div style="left:142px;top:210px;width:1px;height:18px;background:#4a4a4a;"></div>
<div style="left:123px;top:227px;width:20px;height:1px;background:#4a4a4a;"></div>
<div style="left:210px;top:210px;width:1px;height:18px;background:#4a4a4a;"></div>
<div style="left:144px;top:227px;width:67px;height:1px;background:#4a4a4a;"></div>
<div style="left:231px;top:210px;width:1px;height:18px;background:#4a4a4a;"></div>
<div style="left:212px;top:227px;width:20px;height:1px;background:#4a4a4a;"></div>
<div style="left:259px;top:210px;width:1px;height:18px;background:#4a4a4a;"></div>
<div style="left:233px;top:227px;width:27px;height:1px;background:#4a4a4a;"></div>
<div style="left:327px;top:210px;width:1px;height:18px;background:#4a4a4a;"></div>
<div style="left:261px;top:227px;width:67px;height:1px;background:#4a4a4a;"></div>
<div style="left:399px;top:210px;width:1px;height:18px;background:#4a4a4a;"></div>
<div style="left:329px;top:227px;width:71px;height:1px;background:#4a4a4a;"></div>
<span class="t mb" style="top:213px;line-height:12px;font-size:10.5px;color:#fff;left:-121.7px;width:300px;text-align:center;letter-spacing:1.2px;-webkit-text-stroke:0.45px #fff;"><span id="t102">7M</span></span>
<span class="t mr" style="top:214px;line-height:11px;font-size:10px;color:#fff;left:-62.2px;width:300px;text-align:center;"><span id="t103">1.4909</span></span>
<span class="t mr" style="top:214px;line-height:11px;font-size:10px;color:#fff;left:26.80000000000001px;width:300px;text-align:center;"><span id="t104">1.4909</span></span>
<span class="t mr" style="top:214px;line-height:11px;font-size:10px;color:#fff;left:143.8px;width:300px;text-align:center;"><span id="t105">1.4905</span></span>
<span class="t mr" style="top:214px;line-height:11px;font-size:10px;color:#fff;left:213.8px;width:300px;text-align:center;"><span id="t106">1.4909</span></span>
<div style="left:239px;top:211px;width:12px;height:12px;background:#980808;border:1px solid;border-color:#ee1818 #5c0000 #5c0000 #ee1818;"></div>
<div style="left:53px;top:229px;width:1px;height:18px;background:#4a4a4a;"></div>
<div style="left:3px;top:246px;width:51px;height:1px;background:#4a4a4a;"></div>
<div style="left:121px;top:229px;width:1px;height:18px;background:#4a4a4a;"></div>
<div style="left:55px;top:246px;width:67px;height:1px;background:#4a4a4a;"></div>
<div style="left:142px;top:229px;width:1px;height:18px;background:#4a4a4a;"></div>
<div style="left:123px;top:246px;width:20px;height:1px;background:#4a4a4a;"></div>
<div style="left:210px;top:229px;width:1px;height:18px;background:#4a4a4a;"></div>
<div style="left:144px;top:246px;width:67px;height:1px;background:#4a4a4a;"></div>
<div style="left:231px;top:229px;width:1px;height:18px;background:#4a4a4a;"></div>
<div style="left:212px;top:246px;width:20px;height:1px;background:#4a4a4a;"></div>
<div style="left:259px;top:229px;width:1px;height:18px;background:#4a4a4a;"></div>
<div style="left:233px;top:246px;width:27px;height:1px;background:#4a4a4a;"></div>
<div style="left:327px;top:229px;width:1px;height:18px;background:#4a4a4a;"></div>
<div style="left:261px;top:246px;width:67px;height:1px;background:#4a4a4a;"></div>
<div style="left:399px;top:229px;width:1px;height:18px;background:#4a4a4a;"></div>
<div style="left:329px;top:246px;width:71px;height:1px;background:#4a4a4a;"></div>
<span class="t mb" style="top:232px;line-height:12px;font-size:10.5px;color:#fff;left:-121.7px;width:300px;text-align:center;letter-spacing:1.2px;-webkit-text-stroke:0.45px #fff;"><span id="t107">8M</span></span>
<span class="t mr" style="top:233px;line-height:11px;font-size:10px;color:#fff;left:-62.2px;width:300px;text-align:center;"><span id="t108">1.2141</span></span>
<span class="t mr" style="top:233px;line-height:11px;font-size:10px;color:#fff;left:26.80000000000001px;width:300px;text-align:center;"><span id="t109">1.2141</span></span>
<span class="t mr" style="top:233px;line-height:11px;font-size:10px;color:#fff;left:143.8px;width:300px;text-align:center;"><span id="t110">1.2138</span></span>
<span class="t mr" style="top:233px;line-height:11px;font-size:10px;color:#fff;left:213.8px;width:300px;text-align:center;"><span id="t111">1.2141</span></span>
<div style="left:239px;top:230px;width:12px;height:12px;background:#980808;border:1px solid;border-color:#ee1818 #5c0000 #5c0000 #ee1818;"></div>
<div style="left:53px;top:248px;width:1px;height:18px;background:#4a4a4a;"></div>
<div style="left:3px;top:265px;width:51px;height:1px;background:#4a4a4a;"></div>
<div style="left:121px;top:248px;width:1px;height:18px;background:#4a4a4a;"></div>
<div style="left:55px;top:265px;width:67px;height:1px;background:#4a4a4a;"></div>
<div style="left:142px;top:248px;width:1px;height:18px;background:#4a4a4a;"></div>
<div style="left:123px;top:265px;width:20px;height:1px;background:#4a4a4a;"></div>
<div style="left:210px;top:248px;width:1px;height:18px;background:#4a4a4a;"></div>
<div style="left:144px;top:265px;width:67px;height:1px;background:#4a4a4a;"></div>
<div style="left:231px;top:248px;width:1px;height:18px;background:#4a4a4a;"></div>
<div style="left:212px;top:265px;width:20px;height:1px;background:#4a4a4a;"></div>
<div style="left:259px;top:248px;width:1px;height:18px;background:#4a4a4a;"></div>
<div style="left:233px;top:265px;width:27px;height:1px;background:#4a4a4a;"></div>
<div style="left:327px;top:248px;width:1px;height:18px;background:#4a4a4a;"></div>
<div style="left:261px;top:265px;width:67px;height:1px;background:#4a4a4a;"></div>
<div style="left:399px;top:248px;width:1px;height:18px;background:#4a4a4a;"></div>
<div style="left:329px;top:265px;width:71px;height:1px;background:#4a4a4a;"></div>
<span class="t mb" style="top:251px;line-height:12px;font-size:10.5px;color:#fff;left:-121.7px;width:300px;text-align:center;letter-spacing:1.2px;-webkit-text-stroke:0.45px #fff;"><span id="t112">9M</span></span>
<span class="t mr" style="top:252px;line-height:11px;font-size:10px;color:#fff;left:-62.2px;width:300px;text-align:center;"><span id="t113">1.2141</span></span>
<span class="t mr" style="top:252px;line-height:11px;font-size:10px;color:#fff;left:26.80000000000001px;width:300px;text-align:center;"><span id="t114">1.2141</span></span>
<span class="t mr" style="top:252px;line-height:11px;font-size:10px;color:#fff;left:143.8px;width:300px;text-align:center;"><span id="t115">1.2138</span></span>
<span class="t mr" style="top:252px;line-height:11px;font-size:10px;color:#fff;left:213.8px;width:300px;text-align:center;"><span id="t116">1.2141</span></span>
<div style="left:239px;top:249px;width:12px;height:12px;background:#980808;border:1px solid;border-color:#ee1818 #5c0000 #5c0000 #ee1818;"></div>
</div>
<div style="left:402px;top:41px;width:14px;height:282px;background:#a9a9a9;border-left:1px solid #808080;border-right:1px solid #808080;box-sizing:border-box;"></div>
<div style="left:402px;top:41px;width:12px;height:12px;background:#d8d8d8;border:1px solid;border-color:#f4f4f4 #b0b0b0 #b0b0b0 #f4f4f4;"></div>
<div style="left:402px;top:309px;width:12px;height:12px;background:#d8d8d8;border:1px solid;border-color:#f4f4f4 #b0b0b0 #b0b0b0 #f4f4f4;"></div>
<div style="left:402px;top:55px;width:14px;height:1px;background:#000;"></div>
<div style="left:402px;top:56px;width:12px;height:13px;background:#12c8ff;border:1px solid;border-color:#6fe4ff #00a0dc #00a0dc #6fe4ff;"></div>
<div style="left:402px;top:71px;width:14px;height:1px;background:#000;"></div>
<div style="left:402px;top:72px;width:14px;height:1px;background:#6e6e6e;"></div>
<div style="left:402px;top:308px;width:14px;height:1px;background:#6e6e6e;"></div>
<div style="left:417px;top:41px;width:278px;height:58px;background:#000;"></div>
<div style="left:418px;top:41px;width:276px;height:1px;background:#9a9a9a;"></div>
<div style="left:418px;top:41px;width:1px;height:53px;background:#9a9a9a;"></div>
<div style="left:420px;top:42px;width:272px;height:15px;background:#006600;border-right:1px solid #2f9a2f;border-bottom:1px solid #2f9a2f"></div>
<div style="left:420px;top:43px;width:12px;height:12px;background:#005000;border:1px solid;border-color:#1c7c1c #003000 #003000 #1c7c1c;"></div>
<div style="left:665px;top:43px;width:11px;height:12px;background:#005000;border:1px solid;border-color:#1c7c1c #003000 #003000 #1c7c1c;"></div>
<div style="left:678px;top:43px;width:12px;height:12px;background:#005000;border:1px solid;border-color:#1c7c1c #003000 #003000 #1c7c1c;"></div>
<span id="t117" class="t sb" style="top:43px;line-height:14px;font-size:12px;color:#fff;letter-spacing:-0.365px;left:464.7px;">SFX</span>
<span id="t118" class="t sb" style="top:43px;line-height:14px;font-size:12px;color:#fff;letter-spacing:-0.527px;left:489.2px;">USD/GBP</span>
<span id="t119" class="t sb" style="top:43px;line-height:14px;font-size:12px;color:#fff;letter-spacing:0.104px;left:543.45px;">8/5/97</span>
<span id="t120" class="t sb" style="top:43px;line-height:14px;font-size:12px;color:#fff;letter-spacing:-0.508px;left:581.7px;">1:38</span>
<span id="t121" class="t sb" style="top:43px;line-height:14px;font-size:12px;color:#fff;letter-spacing:-0.891px;left:607.2px;">GMT</span>
<span class="t sr" style="top:44px;line-height:12px;font-size:11px;color:#fff;left:534.8px;width:300px;text-align:center;"><span id="t122">?</span></span>
<div style="left:420px;top:58px;width:75px;height:14px;background:#006600;border:1px solid;border-color:#003800 #2f9a2f #2f9a2f #003800;"></div>
<span id="t123" class="t sb" style="top:59px;line-height:14px;font-size:12px;color:#fff;letter-spacing:-0.356px;left:447.1px;">BID</span>
<div style="left:498px;top:58px;width:73px;height:14px;background:#006600;border:1px solid;border-color:#003800 #2f9a2f #2f9a2f #003800;"></div>
<span id="t124" class="t sb" style="top:59px;line-height:14px;font-size:12px;color:#fff;letter-spacing:-0.181px;left:521.5px;">ASK</span>
<div style="left:574px;top:58px;width:56px;height:14px;background:#006600;border:1px solid;border-color:#003800 #2f9a2f #2f9a2f #003800;"></div>
<span id="t125" class="t sb" style="top:59px;line-height:14px;font-size:12px;color:#fff;letter-spacing:0.400px;left:587.1px;">LOW</span>
<div style="left:633px;top:58px;width:58px;height:14px;background:#006600;border:1px solid;border-color:#003800 #2f9a2f #2f9a2f #003800;"></div>
<span id="t126" class="t sb" style="top:59px;line-height:14px;font-size:12px;color:#fff;letter-spacing:-0.500px;left:647.7px;">HIGH</span>
<div style="left:477px;top:75px;width:1px;height:18px;background:#4a4a4a;"></div>
<div style="left:420px;top:92px;width:58px;height:1px;background:#4a4a4a;"></div>
<div style="left:496px;top:75px;width:1px;height:18px;background:#4a4a4a;"></div>
<div style="left:479px;top:92px;width:18px;height:1px;background:#4a4a4a;"></div>
<div style="left:554px;top:75px;width:1px;height:18px;background:#4a4a4a;"></div>
<div style="left:498px;top:92px;width:57px;height:1px;background:#4a4a4a;"></div>
<div style="left:572px;top:75px;width:1px;height:18px;background:#4a4a4a;"></div>
<div style="left:556px;top:92px;width:17px;height:1px;background:#4a4a4a;"></div>
<div style="left:631px;top:75px;width:1px;height:18px;background:#4a4a4a;"></div>
<div style="left:574px;top:92px;width:58px;height:1px;background:#4a4a4a;"></div>
<div style="left:692px;top:75px;width:1px;height:18px;background:#4a4a4a;"></div>
<div style="left:633px;top:92px;width:60px;height:1px;background:#4a4a4a;"></div>
<span class="t mr" style="top:79px;line-height:11px;font-size:10px;color:#fff;left:299px;width:300px;text-align:center;"><span id="t127">107.99</span></span>
<span class="t mr" style="top:79px;line-height:11px;font-size:10px;color:#fff;left:376.5px;width:300px;text-align:center;"><span id="t128">107.99</span></span>
<span class="t mr" style="top:79px;line-height:11px;font-size:10px;color:#fff;left:453px;width:300px;text-align:center;"><span id="t129">107.97</span></span>
<span class="t mr" style="top:79px;line-height:11px;font-size:10px;color:#fff;left:513px;width:300px;text-align:center;"><span id="t130">107.99</span></span>
<div style="left:418px;top:99px;width:66px;height:14px;background:#00006c;"></div>
<div style="left:484px;top:99px;width:65px;height:14px;background:#ffff00;"></div>
<div style="left:549px;top:99px;width:66px;height:14px;background:#008874;border-left:1px solid #002820;box-sizing:border-box;"></div>
<span id="t131" class="t sb" style="top:102px;line-height:10px;font-size:9px;color:#ffee00;letter-spacing:0.000px;left:422px;">News</span>
<span id="t132" class="t sb" style="top:102px;line-height:10px;font-size:9px;color:#000;letter-spacing:0.000px;left:489px;">Help</span>
<span id="t133" class="t sb" style="top:102px;line-height:10px;font-size:9px;color:#000;letter-spacing:-0.169px;left:556px;">Tools</span>
<div style="left:417px;top:113px;width:262px;height:211px;background:#ffff00;"></div>
<div style="left:417px;top:113px;width:262px;height:211px;overflow:hidden">
<span id="t134" class="t sb" style="top:5px;line-height:14px;font-size:12px;color:#000;letter-spacing:-0.104px;left:4.199999999999989px;">Using the FWD Screen</span>
<span id="t135" class="t sr" style="top:31px;line-height:14px;font-size:12px;color:#000;letter-spacing:0.248px;left:4.199999999999989px;">Use this screen to access current</span>
<span id="t136" class="t sr" style="top:45px;line-height:14px;font-size:12px;color:#000;letter-spacing:0.120px;left:4.199999999999989px;">FORWARD RATE information on a range of</span>
<span id="t137" class="t sr" style="top:59px;line-height:14px;font-size:12px;color:#000;letter-spacing:0.123px;left:4.199999999999989px;">currencies. You may select the currency of</span>
<span id="t138" class="t sr" style="top:73px;line-height:14px;font-size:12px;color:#000;letter-spacing:0.101px;left:4.199999999999989px;">interest to you using the tabs at the top of</span>
<span id="t139" class="t sr" style="top:87px;line-height:14px;font-size:12px;color:#000;letter-spacing:0.126px;left:4.199999999999989px;">the screen, directly below the main menu.</span>
<span id="t140" class="t sr" style="top:101px;line-height:14px;font-size:12px;color:#000;letter-spacing:0.241px;left:4.199999999999989px;">Currencies are shown as swift code</span>
<span id="t141" class="t sr" style="top:115px;line-height:14px;font-size:12px;color:#000;letter-spacing:0.185px;left:4.199999999999989px;text-decoration:underline;">abbreviations</span>
<span id="t142" class="t sr" style="top:115px;line-height:14px;font-size:12px;color:#000;left:77.60000000000002px;">.</span>
<span id="t143" class="t sb" style="top:155px;line-height:14px;font-size:12px;color:#000;letter-spacing:-0.092px;left:4.199999999999989px;">For example:</span>
<span id="t144" class="t sr" style="top:155px;line-height:14px;font-size:12px;color:#000;letter-spacing:0.294px;left:81.39999999999998px;">choosing</span>
<span id="t145" class="t sr" style="top:155px;line-height:14px;font-size:12px;color:#000;letter-spacing:0.229px;left:163.60000000000002px;">will call up all</span>
<span id="t146" class="t sr" style="top:169px;line-height:14px;font-size:12px;color:#000;letter-spacing:-0.057px;left:4.199999999999989px;">the FORWARD RATES for DEUTSHMARKS</span>
<span id="t147" class="t sr" style="top:183px;line-height:14px;font-size:12px;color:#000;letter-spacing:0.172px;left:4.199999999999989px;">against the US DOLLAR. These rates will</span>
<span id="t148" class="t sr" style="top:197px;line-height:14px;font-size:12px;color:#000;letter-spacing:0.155px;left:4.199999999999989px;">appear as a table in the frame on the left</span>
<div style="left:135px;top:148px;width:24px;height:16px;background:#9c0000;border:1px solid;border-color:#e02020 #5c0000 #5c0000 #e02020;"></div>
<span class="t sb" style="top:151px;line-height:9px;font-size:8px;color:#fff;left:-2.1000000000000227px;width:300px;text-align:center;"><span id="t149">DEM</span></span>
<div style="left:200px;top:210px;width:14px;height:2px;background:#9c0000;"></div>
</div>
<div style="left:680px;top:114px;width:14px;height:210px;background:#a9a9a9;border-left:1px solid #808080;border-right:1px solid #808080;box-sizing:border-box;"></div>
<div style="left:680px;top:114px;width:12px;height:12px;background:#d8d8d8;border:1px solid;border-color:#f4f4f4 #b0b0b0 #b0b0b0 #f4f4f4;"></div>
<div style="left:680px;top:310px;width:12px;height:12px;background:#d8d8d8;border:1px solid;border-color:#f4f4f4 #b0b0b0 #b0b0b0 #f4f4f4;"></div>
<div style="left:680px;top:128px;width:14px;height:1px;background:#000;"></div>
<div style="left:680px;top:129px;width:12px;height:13px;background:#12c8ff;border:1px solid;border-color:#6fe4ff #00a0dc #00a0dc #6fe4ff;"></div>
<div style="left:680px;top:144px;width:14px;height:1px;background:#000;"></div>
<div style="left:680px;top:145px;width:14px;height:1px;background:#6e6e6e;"></div>
<div style="left:680px;top:309px;width:14px;height:1px;background:#6e6e6e;"></div>
<div style="left:2px;top:328px;width:32px;height:11px;background:#005c00;border:1px solid;border-color:#2a8c2a #003000 #003000 #2a8c2a;"></div>
<span class="t sb" style="top:331px;line-height:9px;font-size:8px;color:#fff;left:-130.7px;width:300px;text-align:center;"><span id="t150">TODAY</span></span>
<div style="left:37px;top:328px;width:34px;height:11px;background:#005c00;border:1px solid;border-color:#2a8c2a #003000 #003000 #2a8c2a;"></div>
<span class="t sb" style="top:331px;line-height:9px;font-size:8px;color:#fff;left:-94.7px;width:300px;text-align:center;"><span id="t151">1 WEEK</span></span>
<div style="left:74px;top:328px;width:34px;height:11px;background:#005c00;border:1px solid;border-color:#2a8c2a #003000 #003000 #2a8c2a;"></div>
<span class="t sb" style="top:331px;line-height:9px;font-size:8px;color:#fff;left:-57.7px;width:300px;text-align:center;"><span id="t152">2 WEEK</span></span>
<div style="left:111px;top:328px;width:35px;height:11px;background:#005c00;border:1px solid;border-color:#2a8c2a #003000 #003000 #2a8c2a;"></div>
<span class="t sb" style="top:331px;line-height:9px;font-size:8px;color:#fff;left:-20.19999999999999px;width:300px;text-align:center;"><span id="t153">3 WEEK</span></span>
<div style="left:149px;top:328px;width:39px;height:11px;background:#005c00;border:1px solid;border-color:#2a8c2a #003000 #003000 #2a8c2a;"></div>
<span class="t sb" style="top:331px;line-height:9px;font-size:8px;color:#fff;left:19.80000000000001px;width:300px;text-align:center;"><span id="t154">1 MONTH</span></span>
<div style="left:192px;top:328px;width:39px;height:11px;background:#005c00;border:1px solid;border-color:#2a8c2a #003000 #003000 #2a8c2a;"></div>
<span class="t sb" style="top:331px;line-height:9px;font-size:8px;color:#fff;left:62.80000000000001px;width:300px;text-align:center;"><span id="t155">6 MONTH</span></span>
<div style="left:234px;top:328px;width:33px;height:11px;background:#005c00;border:1px solid;border-color:#2a8c2a #003000 #003000 #2a8c2a;"></div>
<span class="t sb" style="top:331px;line-height:9px;font-size:8px;color:#fff;left:101.80000000000001px;width:300px;text-align:center;"><span id="t156">1 YEAR</span></span>
<div style="left:598px;top:328px;width:93px;height:11px;background:#005c00;border:1px solid;border-color:#2a8c2a #003000 #003000 #2a8c2a;"></div>
<span class="t sb" style="top:331px;line-height:9px;font-size:8px;color:#fff;left:495.5px;width:300px;text-align:center;"><span id="t157">ALL CURRENT RATES</span></span>
<div style="left:1px;top:342px;width:694px;height:156px;background:#000;"></div>
<div style="left:1px;top:342px;width:693px;height:1px;background:#9a9a9a;"></div>
<div style="left:1px;top:342px;width:1px;height:156px;background:#9a9a9a;"></div>
<div style="left:692px;top:359px;width:1px;height:138px;background:#585858;"></div>
<div style="left:3px;top:496px;width:690px;height:1px;background:#585858;"></div>
<div style="left:3px;top:344px;width:689px;height:14px;background:#006600;border-right:1px solid #2f9a2f;border-bottom:1px solid #2f9a2f"></div>
<span id="t158" class="t sb" style="top:344px;line-height:14px;font-size:12px;color:#fff;letter-spacing:-0.455px;left:234.7px;">USD/GBP</span>
<span id="t159" class="t sb" style="top:344px;line-height:14px;font-size:12px;color:#fff;letter-spacing:-0.448px;left:289.2px;">SFX</span>
<span id="t160" class="t sb" style="top:344px;line-height:14px;font-size:12px;color:#fff;letter-spacing:-0.258px;left:313.45px;">RATE</span>
<span id="t161" class="t sb" style="top:344px;line-height:14px;font-size:12px;color:#fff;letter-spacing:1.750px;left:347.2px;">-</span>
<span id="t162" class="t sb" style="top:344px;line-height:14px;font-size:12px;color:#fff;letter-spacing:-0.257px;left:354.7px;">TODAY'S</span>
<span id="t163" class="t sb" style="top:344px;line-height:14px;font-size:12px;color:#fff;letter-spacing:-0.420px;left:407.95px;">HISTORY</span>
<div style="left:0px;top:498px;width:695px;height:18px;background:#000;"></div>
<span class="t mr" style="top:362.6px;line-height:12px;font-size:10.5px;color:#fff;left:-201.7px;width:300px;text-align:right;letter-spacing:0.7px;"><span id="t164">0</span></span>
<span class="t mr" style="top:378.77000000000004px;line-height:12px;font-size:10.5px;color:#fff;left:-201.7px;width:300px;text-align:right;letter-spacing:0.7px;"><span id="t165">-100</span></span>
<span class="t mr" style="top:394.94000000000005px;line-height:12px;font-size:10.5px;color:#fff;left:-201.7px;width:300px;text-align:right;letter-spacing:0.7px;"><span id="t166">-200</span></span>
<span class="t mr" style="top:411.11px;line-height:12px;font-size:10.5px;color:#fff;left:-201.7px;width:300px;text-align:right;letter-spacing:0.7px;"><span id="t167">-300</span></span>
<span class="t mr" style="top:427.28000000000003px;line-height:12px;font-size:10.5px;color:#fff;left:-201.7px;width:300px;text-align:right;letter-spacing:0.7px;"><span id="t168">-400</span></span>
<span class="t mr" style="top:443.45000000000005px;line-height:12px;font-size:10.5px;color:#fff;left:-201.7px;width:300px;text-align:right;letter-spacing:0.7px;"><span id="t169">-500</span></span>
<span class="t mr" style="top:459.62px;line-height:12px;font-size:10.5px;color:#fff;left:-201.7px;width:300px;text-align:right;letter-spacing:0.7px;"><span id="t170">-600</span></span>
<span class="t mr" style="top:471px;line-height:12px;font-size:10.5px;color:#fff;left:-44.7px;width:300px;text-align:center;letter-spacing:0.7px;"><span id="t171">1</span></span>
<span class="t mr" style="top:471px;line-height:12px;font-size:10.5px;color:#fff;left:-19.50999999999999px;width:300px;text-align:center;letter-spacing:0.7px;"><span id="t172">2</span></span>
<span class="t mr" style="top:471px;line-height:12px;font-size:10.5px;color:#fff;left:5.680000000000007px;width:300px;text-align:center;letter-spacing:0.7px;"><span id="t173">3</span></span>
<span class="t mr" style="top:471px;line-height:12px;font-size:10.5px;color:#fff;left:30.870000000000005px;width:300px;text-align:center;letter-spacing:0.7px;"><span id="t174">4</span></span>
<span class="t mr" style="top:471px;line-height:12px;font-size:10.5px;color:#fff;left:56.06px;width:300px;text-align:center;letter-spacing:0.7px;"><span id="t175">5</span></span>
<span class="t mr" style="top:471px;line-height:12px;font-size:10.5px;color:#fff;left:81.25px;width:300px;text-align:center;letter-spacing:0.7px;"><span id="t176">6</span></span>
<span class="t mr" style="top:471px;line-height:12px;font-size:10.5px;color:#fff;left:106.44px;width:300px;text-align:center;letter-spacing:0.7px;"><span id="t177">7</span></span>
<span class="t mr" style="top:471px;line-height:12px;font-size:10.5px;color:#fff;left:131.63000000000005px;width:300px;text-align:center;letter-spacing:0.7px;"><span id="t178">8</span></span>
<span class="t mr" style="top:471px;line-height:12px;font-size:10.5px;color:#fff;left:156.82px;width:300px;text-align:center;letter-spacing:0.7px;"><span id="t179">9</span></span>
<span class="t mr" style="top:471px;line-height:12px;font-size:10.5px;color:#fff;left:182.01000000000005px;width:300px;text-align:center;letter-spacing:0.7px;"><span id="t180">10</span></span>
<span class="t mr" style="top:471px;line-height:12px;font-size:10.5px;color:#fff;left:207.2px;width:300px;text-align:center;letter-spacing:0.7px;"><span id="t181">11</span></span>
<span class="t mr" style="top:471px;line-height:12px;font-size:10.5px;color:#fff;left:232.39000000000004px;width:300px;text-align:center;letter-spacing:0.7px;"><span id="t182">12</span></span>
<span class="t mr" style="top:471px;line-height:12px;font-size:10.5px;color:#fff;left:257.58000000000004px;width:300px;text-align:center;letter-spacing:0.7px;"><span id="t183">13</span></span>
<span class="t mr" style="top:471px;line-height:12px;font-size:10.5px;color:#fff;left:282.77000000000004px;width:300px;text-align:center;letter-spacing:0.7px;"><span id="t184">14</span></span>
<span class="t mr" style="top:471px;line-height:12px;font-size:10.5px;color:#fff;left:307.96000000000004px;width:300px;text-align:center;letter-spacing:0.7px;"><span id="t185">15</span></span>
<span class="t mr" style="top:471px;line-height:12px;font-size:10.5px;color:#fff;left:333.15000000000003px;width:300px;text-align:center;letter-spacing:0.7px;"><span id="t186">16</span></span>
<span class="t mr" style="top:471px;line-height:12px;font-size:10.5px;color:#fff;left:358.34000000000003px;width:300px;text-align:center;letter-spacing:0.7px;"><span id="t187">17</span></span>
<span class="t mr" style="top:471px;line-height:12px;font-size:10.5px;color:#fff;left:383.53px;width:300px;text-align:center;letter-spacing:0.7px;"><span id="t188">18</span></span>
<span class="t mr" style="top:471px;line-height:12px;font-size:10.5px;color:#fff;left:408.72px;width:300px;text-align:center;letter-spacing:0.7px;"><span id="t189">19</span></span>
<span class="t mr" style="top:471px;line-height:12px;font-size:10.5px;color:#fff;left:433.90999999999997px;width:300px;text-align:center;letter-spacing:0.7px;"><span id="t190">20</span></span>
<span class="t mr" style="top:471px;line-height:12px;font-size:10.5px;color:#fff;left:459.0999999999999px;width:300px;text-align:center;letter-spacing:0.7px;"><span id="t191">21</span></span>
<span class="t mr" style="top:471px;line-height:12px;font-size:10.5px;color:#fff;left:484.28999999999996px;width:300px;text-align:center;letter-spacing:0.7px;"><span id="t192">22</span></span>
<span class="t mr" style="top:482px;line-height:12px;font-size:10.5px;color:#fff;left:219.2px;width:300px;text-align:center;letter-spacing:0.7px;"><span id="t193">Period</span></span>
<span class="t mr" style="left:43px;top:418px;width:30px;text-align:center;line-height:12px;font-size:10.5px;letter-spacing:0.7px;color:#fff;transform:rotate(-90deg);transform-origin:50% 50%">Rate</span>
<svg width="695" height="516" viewBox="0 0 695 516" style="position:absolute;left:0;top:0">
<defs><clipPath id="cl"><rect x="0" y="74" width="401" height="249"/></clipPath></defs>
<g clip-path="url(#cl)" fill="none" stroke="#fff" stroke-width="1.5">
<path d="M132 78.0V90.0" stroke-width="2"/><path d="M128 82.5L132 78.1L136 82.5"/>
<path d="M221 78.0V90.0" stroke-width="2"/><path d="M217 82.5L221 78.1L225 82.5"/>
<path d="M132 97.0V109.0" stroke-width="2"/><path d="M128 101.5L132 97.1L136 101.5"/>
<path d="M221 97.0V109.0" stroke-width="2"/><path d="M217 101.5L221 97.1L225 101.5"/>
<path d="M132 116.0V128.0" stroke-width="2"/><path d="M128 120.5L132 116.1L136 120.5"/>
<path d="M221 116.0V128.0" stroke-width="2"/><path d="M217 120.5L221 116.1L225 120.5"/>
<path d="M132 135.0V147.0" stroke-width="2"/><path d="M128 139.5L132 135.1L136 139.5"/>
<path d="M221 135.0V147.0" stroke-width="2"/><path d="M217 139.5L221 135.1L225 139.5"/>
<path d="M132 154.0V166.0" stroke-width="2"/><path d="M128 158.5L132 154.1L136 158.5"/>
<path d="M221 154.0V166.0" stroke-width="2"/><path d="M217 158.5L221 154.1L225 158.5"/>
<path d="M132 173.0V185.0" stroke-width="2"/><path d="M128 177.5L132 173.1L136 177.5"/>
<path d="M221 173.0V185.0" stroke-width="2"/><path d="M217 177.5L221 173.1L225 177.5"/>
<path d="M132 192.0V204.0" stroke-width="2"/><path d="M128 196.5L132 192.1L136 196.5"/>
<path d="M221 191.5V203.5" stroke-width="2"/><path d="M217 199.0L221 203.4L225 199.0"/>
<path d="M132 211.0V223.0" stroke-width="2"/><path d="M128 215.5L132 211.1L136 215.5"/>
<path d="M221 211.0V223.0" stroke-width="2"/><path d="M217 215.5L221 211.1L225 215.5"/>
<path d="M132 230.0V242.0" stroke-width="2"/><path d="M128 234.5L132 230.1L136 234.5"/>
<path d="M221 230.0V242.0" stroke-width="2"/><path d="M217 234.5L221 230.1L225 234.5"/>
<path d="M132 249.0V261.0" stroke-width="2"/><path d="M128 253.5L132 249.1L136 253.5"/>
<path d="M221 249.0V261.0" stroke-width="2"/><path d="M217 253.5L221 249.1L225 253.5"/>
<path d="M132 268.0V280.0" stroke-width="2"/><path d="M128 272.5L132 268.1L136 272.5"/>
<path d="M221 268.0V280.0" stroke-width="2"/><path d="M217 272.5L221 268.1L225 272.5"/>
<path d="M132 287.0V299.0" stroke-width="2"/><path d="M128 291.5L132 287.1L136 291.5"/>
<path d="M221 287.0V299.0" stroke-width="2"/><path d="M217 291.5L221 287.1L225 291.5"/>
<path d="M132 306.0V318.0" stroke-width="2"/><path d="M128 310.5L132 306.1L136 310.5"/>
<path d="M221 306.0V318.0" stroke-width="2"/><path d="M217 310.5L221 306.1L225 310.5"/>
<path d="M132 325.0V337.0" stroke-width="2"/><path d="M128 329.5L132 325.1L136 329.5"/>
<path d="M221 325.0V337.0" stroke-width="2"/><path d="M217 329.5L221 325.1L225 329.5"/>
</g><g fill="none" stroke="#fff" stroke-width="1.5">
<path d="M488 78.0V90.0" stroke-width="2"/><path d="M484 82.5L488 78.1L492 82.5"/>
<path d="M564 78.0V90.0" stroke-width="2"/><path d="M560 82.5L564 78.1L568 82.5"/>
</g>
<g clip-path="url(#cl)" fill="#fff" shape-rendering="crispEdges">
<rect x="243" y="82" width="6" height="2"/><rect x="245" y="80" width="2" height="6"/>
<rect x="243" y="101" width="6" height="2"/><rect x="245" y="99" width="2" height="6"/>
<rect x="243" y="120" width="6" height="2"/><rect x="245" y="118" width="2" height="6"/>
<rect x="243" y="139" width="6" height="2"/><rect x="245" y="137" width="2" height="6"/>
<rect x="243" y="158" width="6" height="2"/><rect x="245" y="156" width="2" height="6"/>
<rect x="243" y="177" width="6" height="2"/><rect x="245" y="175" width="2" height="6"/>
<rect x="243" y="196" width="6" height="2"/><rect x="245" y="194" width="2" height="6"/>
<rect x="243" y="215" width="6" height="2"/><rect x="245" y="213" width="2" height="6"/>
<rect x="243" y="234" width="6" height="2"/><rect x="245" y="232" width="2" height="6"/>
<rect x="243" y="253" width="6" height="2"/><rect x="245" y="251" width="2" height="6"/>
<rect x="243" y="272" width="6" height="2"/><rect x="245" y="270" width="2" height="6"/>
<rect x="243" y="291" width="6" height="2"/><rect x="245" y="289" width="2" height="6"/>
<rect x="243" y="310" width="6" height="2"/><rect x="245" y="308" width="2" height="6"/>
<rect x="243" y="329" width="6" height="2"/><rect x="245" y="327" width="2" height="6"/>
</g>
<path d="M404.5 50.2L409 45.5L413.5 50.2Z" fill="#000"/><path d="M404.5 313.8L409 318.5L413.5 313.8Z" fill="#000"/><g shape-rendering="crispEdges"><rect x="405" y="59" width="7" height="1" fill="#b4f4ff"/><rect x="405" y="59" width="1" height="1" fill="#fff"/><rect x="406" y="60" width="7" height="1" fill="#0058a8"/><rect x="405" y="61" width="7" height="1" fill="#b4f4ff"/><rect x="405" y="61" width="1" height="1" fill="#fff"/><rect x="406" y="62" width="7" height="1" fill="#0058a8"/><rect x="405" y="63" width="7" height="1" fill="#b4f4ff"/><rect x="405" y="63" width="1" height="1" fill="#fff"/><rect x="406" y="64" width="7" height="1" fill="#0058a8"/><rect x="405" y="65" width="7" height="1" fill="#b4f4ff"/><rect x="405" y="65" width="1" height="1" fill="#fff"/><rect x="406" y="66" width="7" height="1" fill="#0058a8"/></g>
<path d="M682.5 123.2L687 118.5L691.5 123.2Z" fill="#000"/><path d="M682.5 314.8L687 319.5L691.5 314.8Z" fill="#000"/><g shape-rendering="crispEdges"><rect x="683" y="132" width="7" height="1" fill="#b4f4ff"/><rect x="683" y="132" width="1" height="1" fill="#fff"/><rect x="684" y="133" width="7" height="1" fill="#0058a8"/><rect x="683" y="134" width="7" height="1" fill="#b4f4ff"/><rect x="683" y="134" width="1" height="1" fill="#fff"/><rect x="684" y="135" width="7" height="1" fill="#0058a8"/><rect x="683" y="136" width="7" height="1" fill="#b4f4ff"/><rect x="683" y="136" width="1" height="1" fill="#fff"/><rect x="684" y="137" width="7" height="1" fill="#0058a8"/><rect x="683" y="138" width="7" height="1" fill="#b4f4ff"/><rect x="683" y="138" width="1" height="1" fill="#fff"/><rect x="684" y="139" width="7" height="1" fill="#0058a8"/></g>
<g fill="none" stroke="#fff" stroke-width="1.1"><path d="M11.1 47.800000000000004A3 3 0 1 0 9.5 52.5"/><path d="M11.5 48.300000000000004V51.4M9.399999999999999 49.1L11.5 51.4L13.6 49.1"/></g>
<g fill="none" stroke="#fff" stroke-width="1.1"><path d="M428.09999999999997 47.800000000000004A3 3 0 1 0 426.5 52.5"/><path d="M428.5 48.300000000000004V51.4M426.4 49.1L428.5 51.4L430.59999999999997 49.1"/></g>
<g fill="none" stroke="#fff" stroke-width="1.25"><path d="M374.5 46V53.5H382.5"/><path d="M375.5 51L377 49L379 51L382 47.8"/></g>
<g fill="none" stroke="#fff" stroke-width="1.25"><path d="M667.5 46V53.5H675.5"/><path d="M668.5 51L670 49L672 51L675 47.8"/></g>
<g shape-rendering="crispEdges" fill="none"><path d="M130.5 368V466" stroke="#585858"/><path d="M155.5 368V466" stroke="#585858"/><path d="M181.5 368V466" stroke="#585858"/><path d="M206.5 368V466" stroke="#585858"/><path d="M231.5 368V466" stroke="#585858"/><path d="M256.5 368V466" stroke="#585858"/><path d="M281.5 368V466" stroke="#585858"/><path d="M307.5 368V466" stroke="#585858"/><path d="M332.5 368V466" stroke="#585858"/><path d="M357.5 368V466" stroke="#585858"/><path d="M382.5 368V466" stroke="#585858"/><path d="M407.5 368V466" stroke="#585858"/><path d="M432.5 368V466" stroke="#585858"/><path d="M458.5 368V466" stroke="#585858"/><path d="M483.5 368V466" stroke="#585858"/><path d="M508.5 368V466" stroke="#585858"/><path d="M533.5 368V466" stroke="#585858"/><path d="M558.5 368V466" stroke="#585858"/><path d="M584.5 368V466" stroke="#585858"/><path d="M609.5 368V466" stroke="#585858"/><path d="M105 384.5H635" stroke="#585858"/><path d="M105 400.5H635" stroke="#585858"/><path d="M105 416.5H635" stroke="#585858"/><path d="M105 432.5H635" stroke="#585858"/><path d="M105 448.5H635" stroke="#585858"/><rect x="105.5" y="368.5" width="529" height="97" stroke="#fff"/><path d="M130.5 368V374M130.5 460V466" stroke="#fff"/><path d="M155.5 368V374M155.5 460V466" stroke="#fff"/><path d="M181.5 368V374M181.5 460V466" stroke="#fff"/><path d="M206.5 368V374M206.5 460V466" stroke="#fff"/><path d="M231.5 368V374M231.5 460V466" stroke="#fff"/><path d="M256.5 368V374M256.5 460V466" stroke="#fff"/><path d="M281.5 368V374M281.5 460V466" stroke="#fff"/><path d="M307.5 368V374M307.5 460V466" stroke="#fff"/><path d="M332.5 368V374M332.5 460V466" stroke="#fff"/><path d="M357.5 368V374M357.5 460V466" stroke="#fff"/><path d="M382.5 368V374M382.5 460V466" stroke="#fff"/><path d="M407.5 368V374M407.5 460V466" stroke="#fff"/><path d="M432.5 368V374M432.5 460V466" stroke="#fff"/><path d="M458.5 368V374M458.5 460V466" stroke="#fff"/><path d="M483.5 368V374M483.5 460V466" stroke="#fff"/><path d="M508.5 368V374M508.5 460V466" stroke="#fff"/><path d="M533.5 368V374M533.5 460V466" stroke="#fff"/><path d="M558.5 368V374M558.5 460V466" stroke="#fff"/><path d="M584.5 368V374M584.5 460V466" stroke="#fff"/><path d="M609.5 368V374M609.5 460V466" stroke="#fff"/><path d="M105 384.5H111M629 384.5H635" stroke="#fff"/><path d="M105 400.5H111M629 400.5H635" stroke="#fff"/><path d="M105 416.5H111M629 416.5H635" stroke="#fff"/><path d="M105 432.5H111M629 432.5H635" stroke="#fff"/><path d="M105 448.5H111M629 448.5H635" stroke="#fff"/></g>
<polyline points="105.5,416.5 130.5,420.5 155.5,422.5 181.5,418.5 206.5,424.5 231.5,420.5 256.5,417.5 281.5,419.5 307.5,422.5 332.5,416.5 357.5,420.5 382.5,416.5 407.5,425.5 432.5,422.5 458.5,425.5 483.5,422.5 508.5,420.5 533.5,423.5 558.5,420.5" fill="none" stroke="#f0d000" stroke-width="1" shape-rendering="crispEdges"/>
<path d="M669.5 53.2C669.5 51.6 672.5 51.6 672.5 53.2V57.8C673.6 57.2 675 57.6 675.2 59C676.2 58.6 677.2 59.2 677.3 60.4C678.2 60.4 678.6 61 678.6 62V64C678.6 65.2 678 66 677.6 67.4H670.6C670.2 66 669.4 65 668.6 64L666 61.2C665 60 665 58.4 666.4 58.4C667.4 58.4 668.6 59.8 669.5 60.8Z" fill="#fff" stroke="#000" stroke-width="1" stroke-linejoin="round"/><path d="M672.5 58V61M675.2 59.2V61.6M677.3 60.6V62.4" stroke="#000" stroke-width="0.9" fill="none"/>
</svg>
</div>
</body></html>
